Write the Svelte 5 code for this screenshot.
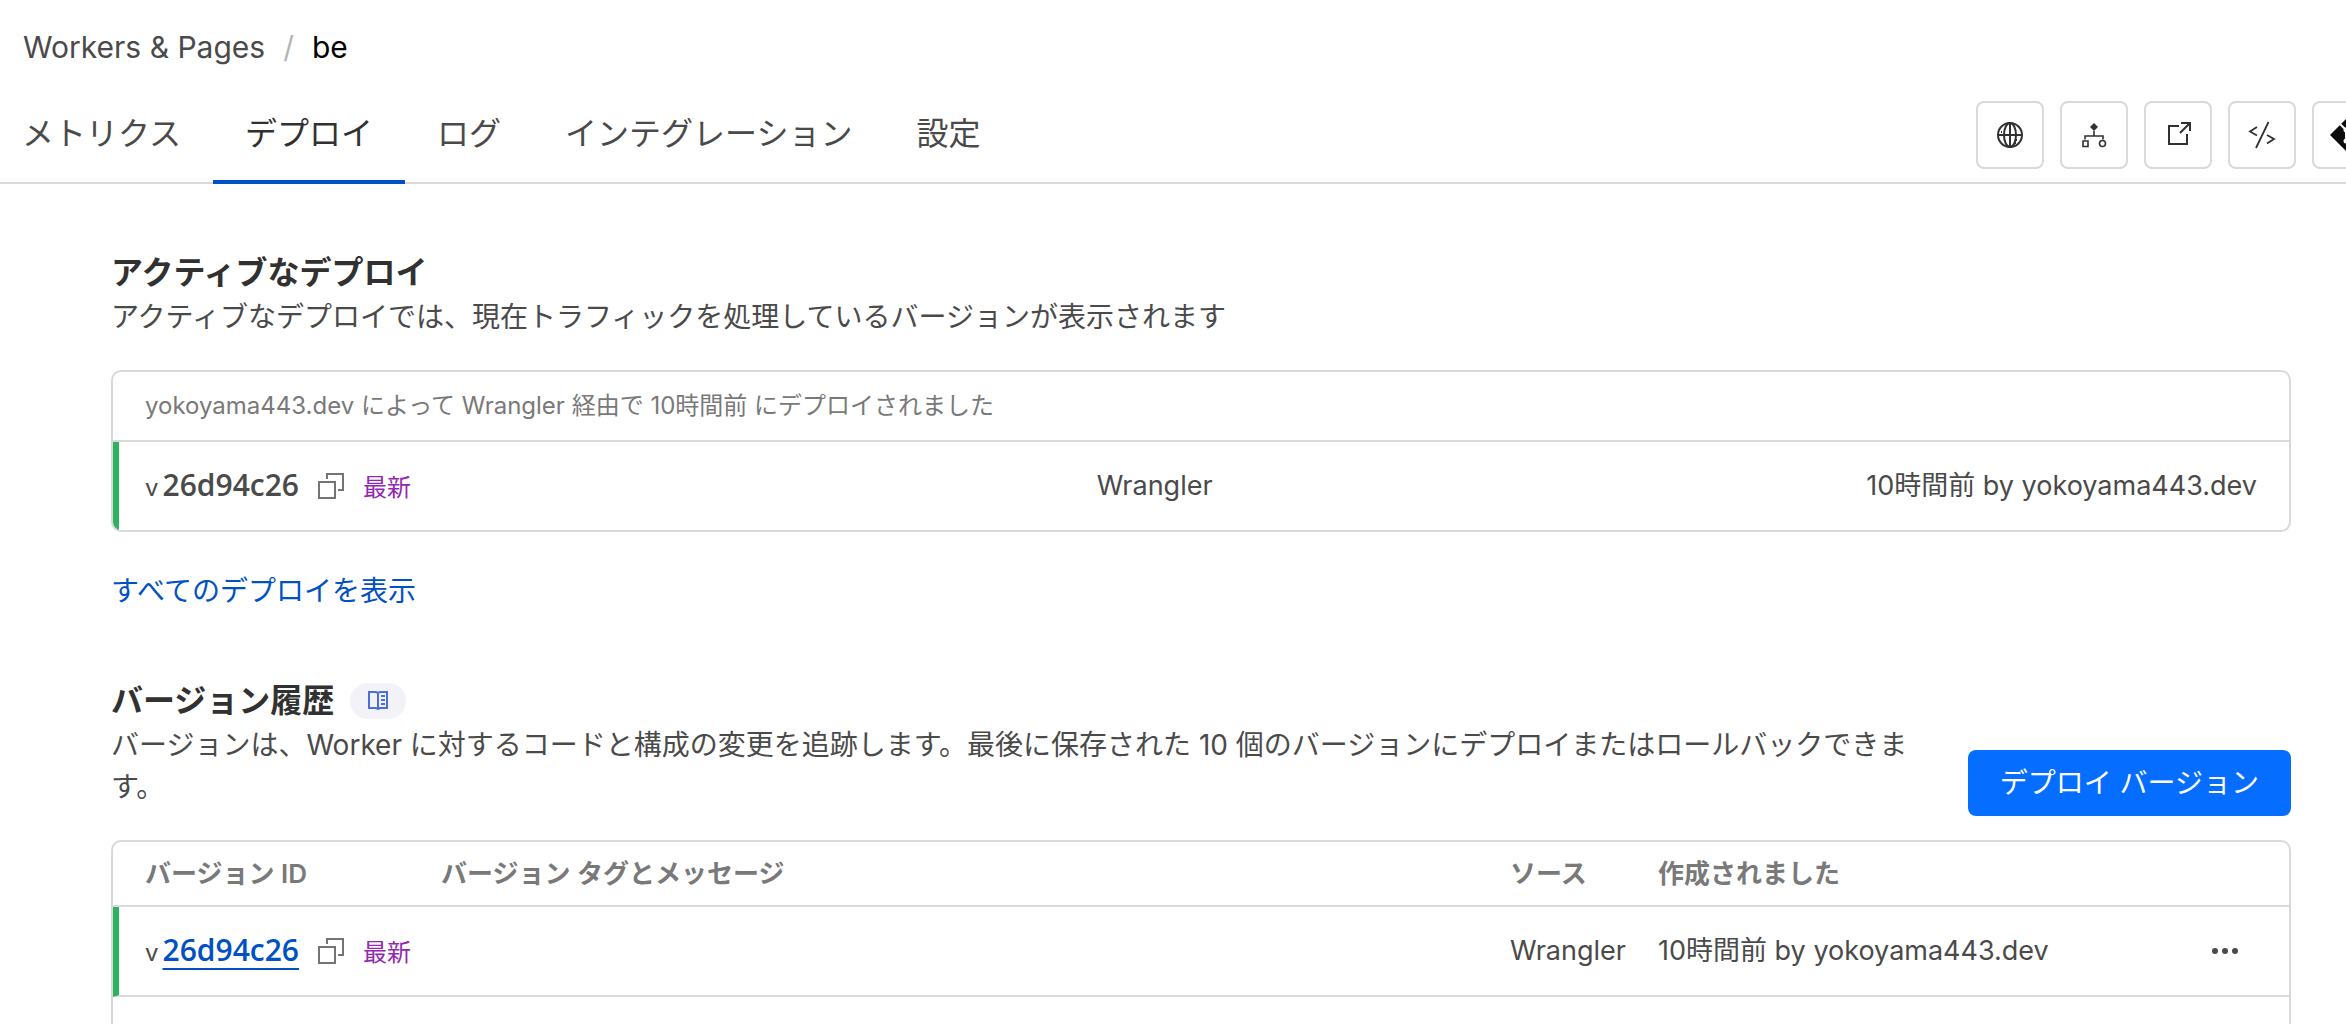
<script>
    const tabs = [
        { label: 'メトリクス', active: false },
        { label: 'デプロイ', active: true },
        { label: 'ログ', active: false },
        { label: 'インテグレーション', active: false },
        { label: '設定', active: false }
    ];

    const versions = [
        { id: '26d94c26', tag: '最新', message: '', source: 'Wrangler', created: '10時間前 by yokoyama443.dev' }
    ];
</script>

{#snippet copyIcon()}
    <svg width="26" height="26" viewBox="0 0 26 26" fill="none" stroke="#747474" stroke-width="2">
        <path d="M9 6V1h16v16h-5" />
        <path d="M1 9h16v16H1z" />
    </svg>
{/snippet}

<div class="page">
    <header>
        <nav class="breadcrumb" aria-label="breadcrumb">
            <a href="#workers">Workers &amp; Pages</a>
            <span class="slash">/</span>
            <span class="current">be</span>
        </nav>

        <div class="tab-bar">
            <nav class="tabs">
                {#each tabs as tab}
                    <a href="#tab" class:active={tab.active}>{tab.label}</a>
                {/each}
            </nav>

            <div class="actions">
                <button aria-label="Domains">
                    <svg width="28" height="28" viewBox="0 0 28 28" fill="none" stroke="#313131" stroke-width="2">
                        <circle cx="14" cy="14" r="12" />
                        <ellipse cx="14" cy="14" rx="6" ry="12" />
                        <path d="M14 2v24M2 14h24" />
                        <path d="M8 8h1M5 11h1M20 19h1M19 22h1" />
                    </svg>
                </button>
                <button aria-label="Routes">
                    <svg width="28" height="28" viewBox="0 0 28 28" fill="none" stroke="#313131" stroke-width="1.6">
                        <path d="M14 2l4 4-4 4-4-4z" fill="#313131" stroke="none" />
                        <path d="M14 10v5.5M5 18.5v-3.5h18v3.5" />
                        <path d="M3 20h5v5.5H3z" />
                        <circle cx="22.5" cy="22.5" r="3" />
                    </svg>
                </button>
                <button aria-label="Visit">
                    <svg width="28" height="28" viewBox="0 0 28 28" fill="none" stroke="#313131" stroke-width="2">
                        <path d="M15 5H5v18h18V13" />
                        <path d="M17 2h9v8M26 2L16 12" />
                    </svg>
                </button>
                <button aria-label="Edit code">
                    <svg width="28" height="28" viewBox="0 0 28 28" fill="none" stroke="#313131" stroke-width="1.8">
                        <path d="M9 6l-7 4.500 7 4M19 14l7 4-7 4.500M20.500 1L8 27" />
                    </svg>
                </button>
                <button aria-label="Git">
                    <svg width="32" height="32" viewBox="0 0 32 32">
                        <path d="M16 0l16 16-16 16L0 16z" fill="#0d0d0d" />
                        <path d="M9 4l7 7v12M16 11l6 6" fill="none" stroke="#fff" stroke-width="2" />
                        <circle cx="16" cy="11" r="2.500" fill="#fff" />
                        <circle cx="16" cy="22" r="2.500" fill="#fff" />
                        <circle cx="22" cy="17" r="2.500" fill="#fff" />
                    </svg>
                </button>
            </div>
        </div>
    </header>

    <main>
        <section>
            <h2>アクティブなデプロイ</h2>
            <p>アクティブなデプロイでは、現在トラフィックを処理しているバージョンが表示されます</p>

            <div class="card active-card">
                <div class="card-head">yokoyama443.dev によって Wrangler 経由で 10時間前 にデプロイされました</div>
                <div class="card-row">
                    <div class="version">
                        <span class="v">v</span>
                        <span class="hash">26d94c26</span>
                        <button class="copy" aria-label="Copy">{@render copyIcon()}</button>
                        <span class="tag">最新</span>
                    </div>
                    <span>Wrangler</span>
                    <span>10時間前 by yokoyama443.dev</span>
                </div>
            </div>

            <a class="show-all" href="#all">すべてのデプロイを表示</a>
        </section>

        <section>
            <div class="section-head">
                <div class="intro">
                    <div class="title">
                        <h2>バージョン履歴</h2>
                        <a class="docs" href="#docs" aria-label="Docs">
                            <svg width="22" height="22" viewBox="0 0 22 22" fill="none" stroke="#4a6fdc" stroke-width="2">
                                <path d="M11 3L9 2H2v16h7l2 1 2-1h7V2h-7zM11 3v17" />
                                <path d="M14 6h4M14 10h4M14 14h4" />
                            </svg>
                        </a>
                    </div>
                    <p>バージョンは、Worker に対するコードと構成の変更を追跡します。最後に保存された 10 個のバージョンにデプロイまたはロールバックできます。</p>
                </div>
                <button class="primary">デプロイ バージョン</button>
            </div>

            <div class="card">
                <table>
                    <thead>
                        <tr>
                            <th class="col-id">バージョン ID</th>
                            <th>バージョン タグとメッセージ</th>
                            <th class="col-source">ソース</th>
                            <th class="col-created">作成されました</th>
                            <th class="col-menu" aria-label="Actions"></th>
                        </tr>
                    </thead>
                    <tbody>
                        {#each versions as version}
                            <tr>
                                <td class="live">
                                    <div class="version">
                                        <span class="v">v</span>
                                        <a class="hash" href="#version">{version.id}</a>
                                        <button class="copy" aria-label="Copy">{@render copyIcon()}</button>
                                        <span class="tag">{version.tag}</span>
                                    </div>
                                </td>
                                <td>{version.message}</td>
                                <td>{version.source}</td>
                                <td>{version.created}</td>
                                <td>
                                    <button class="menu" aria-label="Menu">
                                        <svg width="26" height="6" viewBox="0 0 26 6" fill="#4a4a4a">
                                            <circle cx="3" cy="3" r="3" />
                                            <circle cx="13" cy="3" r="3" />
                                            <circle cx="23" cy="3" r="3" />
                                        </svg>
                                    </button>
                                </td>
                            </tr>
                        {/each}
                        <tr>
                            <td colspan="5"></td>
                        </tr>
                    </tbody>
                </table>
            </div>
        </section>
    </main>
</div>

<style>
    :global(body) {
        margin: 0;
        background: #fff;
    }

    .page {
        height: 100vh;
        overflow: hidden;
        font-family: Inter, 'Noto Sans CJK JP', sans-serif;
        font-size: 28px;
        line-height: 42px;
        color: #4a4a4a;
    }

    a {
        color: #0051c3;
        text-decoration: none;
    }

    button {
        font: inherit;
        cursor: pointer;
    }

    svg {
        display: block;
    }

    /* Header */
    .breadcrumb {
        display: flex;
        gap: 18px;
        padding: 23px 23px 0;
        font-size: 30px;
        line-height: 48px;
    }

    .breadcrumb a {
        color: #4a4a4a;
    }

    .slash {
        color: #b6b6b6;
    }

    .current {
        color: #000;
    }

    .tab-bar {
        display: flex;
        justify-content: space-between;
        margin-top: 25px;
        padding-left: 22px;
        border-bottom: 2px solid #d9d9d9;
    }

    .tabs {
        display: flex;
        font-size: 32px;
        line-height: 48px;
    }

    .tabs a {
        margin-bottom: -2px;
        padding: 14px 32px 22px;
        border-bottom: 4px solid transparent;
        color: #4a4a4a;
    }

    .tabs a:first-child {
        padding-left: 0;
    }

    .tabs a.active {
        border-bottom-color: #0051c3;
        color: #313131;
    }

    .actions {
        display: flex;
        gap: 16px;
        padding-top: 5px;
        margin-right: -34px;
    }

    .actions button {
        display: flex;
        align-items: center;
        justify-content: center;
        width: 68px;
        height: 68px;
        padding: 0;
        border: 2px solid #d9d9d9;
        border-radius: 8px;
        background: #fff;
    }

    /* Content */
    main {
        padding: 66px 55px 0 111px;
    }

    h2 {
        margin: 0;
        font-size: 32px;
        line-height: 46px;
        font-weight: 700;
        color: #313131;
    }

    p {
        margin: 0;
    }

    .card {
        border: 2px solid #d9d9d9;
        border-radius: 10px;
        overflow: hidden;
    }

    .active-card {
        margin: 32px 0 38px;
    }

    .card-head {
        padding: 14px 32px;
        border-bottom: 2px solid #d9d9d9;
        font-size: 24px;
        line-height: 40px;
        color: #797979;
    }

    .card-row {
        display: flex;
        align-items: center;
        justify-content: space-between;
        height: 88px;
        padding: 0 32px 0 26px;
        border-left: 6px solid #2db35e;
        font-size: 27px;
    }

    .version {
        display: flex;
        align-items: baseline;
        white-space: nowrap;
    }

    .card-row .version {
        padding-right: 32px;
    }

    .v {
        margin-right: 4px;
        font-size: 24px;
    }

    .hash {
        font-family: 'Open Sans', sans-serif;
        font-size: 30px;
        font-weight: 600;
    }

    a.hash {
        text-decoration: underline;
        text-decoration-thickness: 2px;
        text-underline-offset: 7px;
    }

    .copy {
        align-self: center;
        margin: 0 19px;
        padding: 0;
        border: 0;
        background: none;
    }

    .tag {
        font-size: 24px;
        color: #9327b3;
    }

    .show-all {
        display: inline-block;
    }

    .section-head {
        display: flex;
        align-items: flex-end;
        justify-content: space-between;
        gap: 48px;
        margin: 66px 0 24px;
    }

    .intro {
        padding-bottom: 8px;
    }

    .title {
        display: flex;
        align-items: center;
        gap: 16px;
    }

    .docs {
        padding: 7px 17px;
        border-radius: 18px;
        background: #f2f2f8;
    }

    .primary {
        height: 66px;
        padding: 0 32px;
        border: 0;
        border-radius: 8px;
        background: #056dff;
        color: #fff;
        white-space: nowrap;
    }

    /* Versions table */
    table {
        width: 100%;
        table-layout: fixed;
        border-spacing: 0;
        text-align: left;
        font-size: 27px;
    }

    th,
    td {
        box-sizing: border-box;
        padding: 0 0 0 16px;
        border-bottom: 2px solid #d9d9d9;
    }

    th {
        height: 65px;
        font-size: 26px;
        line-height: 40px;
        font-weight: 600;
        color: #797979;
    }

    td {
        height: 90px;
    }

    .col-id {
        width: 312px;
        padding-left: 32px;
    }

    .col-source {
        width: 148px;
    }

    .col-created {
        width: 534px;
    }

    .col-menu {
        width: 113px;
    }

    /* Green bar on the version that serves traffic */
    .live {
        padding-left: 26px;
        border-left: 6px solid #2db35e;
    }

    .menu {
        display: block;
        padding: 12px 20px;
        border: 0;
        background: none;
    }
</style>
